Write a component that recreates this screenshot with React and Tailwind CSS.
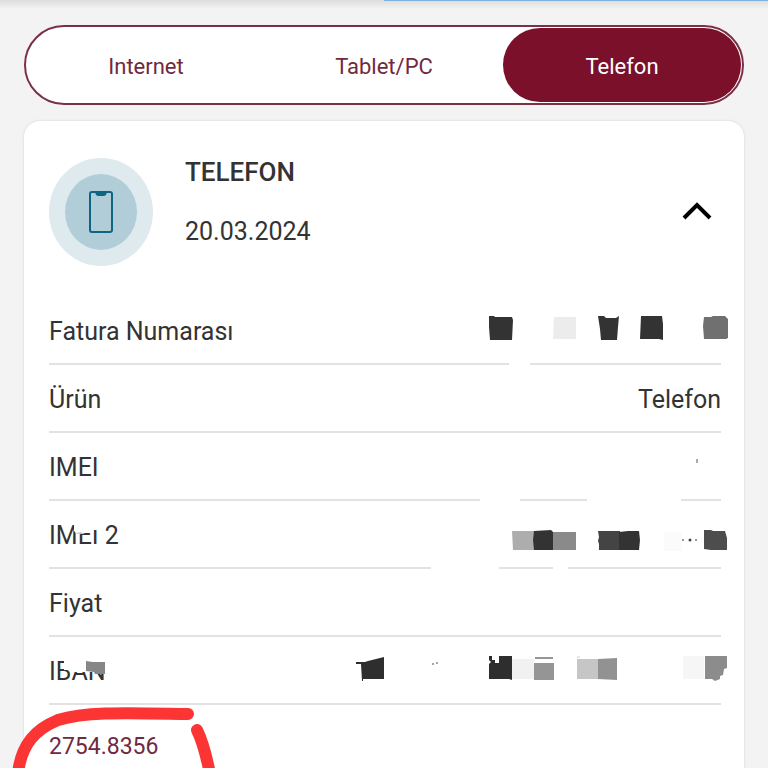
import { useState } from "react";

const tabs = ["Internet", "Tablet/PC", "Telefon"];

// Masked values, anchored to the right edge of the row
function Mask({ children }) {
  return (
    <svg
      className="absolute -right-2 top-0 h-[68px] w-[389px]"
      viewBox="340 0 389 68"
      aria-hidden="true"
    >
      {children}
    </svg>
  );
}

// Masks over the row label, anchored to the left edge
function LabelMask({ children }) {
  return (
    <svg
      className="absolute left-0 top-0 h-[68px] w-20"
      viewBox="49 0 80 68"
      aria-hidden="true"
    >
      {children}
    </svg>
  );
}

function InvoiceMask() {
  return (
    <Mask>
      <path d="M489 19h5l1 1h17l1 3-1 20h-22l-1-13z" fill="#333" />
      <path d="M554 20h22v22h-23z" fill="#ececec" />
      <path d="M598 19h6l2 2h10l3-2-1 11-1 13h-16l-1-11z" fill="#333" />
      <path d="M641 19h21l1 8v16l-4-1h-19z" fill="#333" />
      <path d="M704 20h7l2-1h12l3 3v19l-2 1h-22l-1-13z" fill="#707070" />
      <path d="M509 65h21v4h-21z" fill="#fff" />
    </Mask>
  );
}

function ImeiMask() {
  return (
    <Mask>
      <path d="M697 26v4" stroke="#555" />
      <path d="M480 65h40v4h-40zM587 65h94v4h-94z" fill="#fff" />
    </Mask>
  );
}

function Imei2Mask() {
  return (
    <Mask>
      <path d="M512 30h22v19h-21z" fill="#adadad" />
      <path d="M553 31h23v18h-23z" fill="#8a8a8a" />
      <path d="M534 30l17-1 2 2v18h-19l-1-10z" fill="#333" />
      <path d="M598 30h22v19h-21v-6l-1-3 1-4z" fill="#444" />
      <path d="M619 31l9-1h11l1 9-1 10h-20z" fill="#333" />
      <path d="M664 31h18v19h-18z" fill="#fbfbfb" />
      <circle cx="683" cy="39" r="1" fill="#777" />
      <circle cx="690" cy="39" r="1.5" fill="#444" />
      <circle cx="696" cy="39" r="1" fill="#777" />
      <path d="M704 29h7l2 1h12l2 7v12h-16l-7-1z" fill="#4d4d4d" />
      <path d="M431 65h68v4h-68zM553 65h15v4h-15z" fill="#fff" />
    </Mask>
  );
}

function IbanMask() {
  return (
    <Mask>
      <path d="M356 25h9l3-1 16-4v22h-21v2h-1l-1-17h-5z" fill="#2e2e2e" />
      <circle cx="433" cy="27" r="1" fill="#888" />
      <circle cx="437" cy="26" r="1" fill="#888" />
      <path d="M489 19h3v4h3v3h4v-7h13v24l-3-1h-20V27l2-2-2-2z" fill="#2e2e2e" />
      <path d="M512 22h22v20h-22z" fill="#f1f1f1" />
      <path d="M535 20h18v2h-18zM534 26h20v17h-20z" fill="#959595" />
      <path d="M577 22h21v20h-21z" fill="#c6c6c6" />
      <path d="M598 22l19-1v22l-19-1z" fill="#929292" />
      <path d="M577 20h3" stroke="#ccc" />
      <path d="M683 19h21v23h-21z" fill="#f6f6f6" />
      <path d="M705 19h22v12l-3 1-1 6-3 1v3l-5 2-3-2h-7V20z" fill="#8c8c8c" />
    </Mask>
  );
}

const rows = [
  { label: "Fatura Numarası", mask: <InvoiceMask /> },
  { label: "Ürün", value: "Telefon" },
  { label: "IMEI", mask: <ImeiMask /> },
  {
    label: "IMEI 2",
    mask: <Imei2Mask />,
    labelMask: (
      <LabelMask>
        <path d="M74 22h27v7h-8v3H79l-2 1-3-3z" fill="#fff" />
        <path d="M76 32l5-1 4 2h-8z" fill="#ccc" />
      </LabelMask>
    ),
  },
  { label: "Fiyat" },
  {
    label: "IBAN",
    mask: <IbanMask />,
    labelMask: (
      <LabelMask>
        <path d="M64 22h44v13H73l-2-2h-7z" fill="#fff" />
        <path d="M86 24l7 1h12v12H95l-1-2-8-1z" fill="#868686" />
      </LabelMask>
    ),
  },
];

function PhoneIcon() {
  return (
    <div className="flex h-[108px] w-[104px] items-center justify-center rounded-[50%] bg-[#dfeaef]">
      <div className="flex h-[76px] w-[72px] items-center justify-center rounded-[50%] bg-[#b1ced8]">
        <svg width="24" height="42" viewBox="0 0 24 42" fill="none">
          <rect x="1" y="1" width="22" height="40" rx="2" stroke="#0f6484" strokeWidth="2" />
          <path d="M6 1h12l-1 3-2 1H9L7 4z" fill="#0f6484" />
        </svg>
      </div>
    </div>
  );
}

export default function App() {
  const [active, setActive] = useState("Telefon");
  const [open, setOpen] = useState(true);

  return (
    <div className="flex min-h-screen flex-col bg-[#f3f3f3] font-[Roboto,sans-serif] text-[#333]">
      {/* Progress line under the app bar */}
      <div className="flex h-[9px] bg-linear-to-b from-[#dcdcdc] to-[#f3f3f3]">
        <div className="ml-auto h-px w-1/2 bg-[#7fb2dc]" />
      </div>

      <main className="flex flex-1 flex-col px-6 pt-4">
        <div className="grid h-20 grid-cols-3 rounded-full border-2 border-[#7b3045] bg-white p-px">
          {tabs.map((tab) => (
            <button
              key={tab}
              type="button"
              onClick={() => setActive(tab)}
              className={
                active === tab
                  ? "rounded-full bg-[#7a1029] pt-0.5 text-[22px] text-white"
                  : "rounded-full pt-0.5 text-[22px] text-[#6f2a3f]"
              }
            >
              {tab}
            </button>
          ))}
        </div>

        <section className="mt-4 flex-1 rounded-t-2xl bg-white pr-[23px] pl-[25px] shadow-[0_0_3px_rgba(0,0,0,0.12)]">
          <header className="flex h-44 items-center gap-8 pt-1.5">
            <PhoneIcon />
            <div className="flex flex-1 flex-col gap-7 pb-5">
              <h2 className="text-[26px] leading-8 font-medium">TELEFON</h2>
              <p className="text-[25px] leading-8">20.03.2024</p>
            </div>
            <button type="button" aria-label="Detay" onClick={() => setOpen(!open)} className="pr-2 pb-0.5">
              <svg width="32" height="20" viewBox="0 0 32 20" fill="none">
                <path d="M3 17L16 4l13 13" stroke="#000" strokeWidth="4" />
              </svg>
            </button>
          </header>

          {open && (
            <dl>
              {rows.map((row) => (
                <div
                  key={row.label}
                  className="relative flex h-[68px] items-center justify-between border-b-2 border-[#e2e2e2] pt-1 text-[25px]"
                >
                  <dt>{row.label}</dt>
                  <dd>{row.value}</dd>
                  {row.mask}
                  {row.labelMask}
                </div>
              ))}
            </dl>
          )}

          <div className="relative h-[63px] pt-[26px]">
            <p className="text-[23px] leading-8 text-[#6f2a3f]">2754.8356</p>
            <svg
              className="absolute top-0 -left-[37px] h-[63px] w-[204px]"
              viewBox="12 705 204 63"
              fill="none"
              stroke="#fb3434"
              strokeWidth="12"
              strokeLinecap="round"
            >
              <path d="M18 774C21 744 36 729 58 720C87 711 130 713 188 714" />
              <path d="M197 730C203 742 206 754 210 774" />
            </svg>
          </div>
        </section>
      </main>
    </div>
  );
}
